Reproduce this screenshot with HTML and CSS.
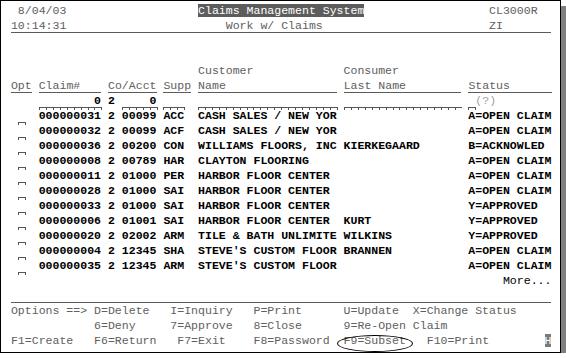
FILE: index.html
```html
<!DOCTYPE html>
<html lang="en">
<head>
	<meta charset="UTF-8" />
	<title>Work w/ Claims</title>
	<link rel="stylesheet" href="styles.css">
</head>
<body>
<div class="screen">
<div class="row">  8/04/03                   <span class="title">Claims Management System</span>                  CL3000R</div>
<div class="row"> <span class="ul">10:14:31                       Work w/ Claims                        ZI       </span></div>
<div class="row"> </div>
<div class="row"> </div>
<div class="row">                            Customer             Consumer</div>
<div class="row"> <span class="ul">Opt</span> <span class="ul">Claim#   </span> <span class="ul">Co/Acct</span> <span class="ul">Supp</span> <span class="ul">Name                </span> <span class="ul">Last Name        </span> <span class="ul">Status      </span></div>
<div class="row">     <span class="fld data">        0</span> <span class="data">2</span> <span class="fld data">    0</span> <span class="fld">   </span>  <span class="fld">                    </span> <span class="fld">                 </span> <span class="fld"> </span><span class="hint">(?)</span></div>
<div class="row">  <span class="fld"> </span>  <span class="data">000000031 2 00099 ACC  CASH SALES / NEW YOR                   A=OPEN CLAIM</span></div>
<div class="row">  <span class="fld"> </span>  <span class="data">000000032 2 00099 ACF  CASH SALES / NEW YOR                   A=OPEN CLAIM</span></div>
<div class="row">  <span class="fld"> </span>  <span class="data">000000036 2 00200 CON  WILLIAMS FLOORS, INC KIERKEGAARD       B=ACKNOWLED</span></div>
<div class="row">  <span class="fld"> </span>  <span class="data">000000008 2 00789 HAR  CLAYTON FLOORING                       A=OPEN CLAIM</span></div>
<div class="row">  <span class="fld"> </span>  <span class="data">000000011 2 01000 PER  HARBOR FLOOR CENTER                    A=OPEN CLAIM</span></div>
<div class="row">  <span class="fld"> </span>  <span class="data">000000028 2 01000 SAI  HARBOR FLOOR CENTER                    A=OPEN CLAIM</span></div>
<div class="row">  <span class="fld"> </span>  <span class="data">000000033 2 01000 SAI  HARBOR FLOOR CENTER                    Y=APPROVED</span></div>
<div class="row">  <span class="fld"> </span>  <span class="data">000000006 2 01001 SAI  HARBOR FLOOR CENTER  KURT              Y=APPROVED</span></div>
<div class="row">  <span class="fld"> </span>  <span class="data">000000020 2 02002 ARM  TILE &amp; BATH UNLIMITE WILKINS           Y=APPROVED</span></div>
<div class="row">  <span class="fld"> </span>  <span class="data">000000004 2 12345 SHA  STEVE'S CUSTOM FLOOR BRANNEN           A=OPEN CLAIM</span></div>
<div class="row">  <span class="fld"> </span>  <span class="data">000000035 2 12345 ARM  STEVE'S CUSTOM FLOOR                   A=OPEN CLAIM</span></div>
<div class="row">                                                                        <span class="more">More...</span></div>
<div class="row"> <span class="ul">                                                                              </span></div>
<div class="row"> Options ==> D=Delete   I=Inquiry   P=Print      U=Update  X=Change Status</div>
<div class="row">             6=Deny     7=Approve   8=Close      9=Re-Open Claim</div>
<div class="row"> F1=Create   F6=Return   F7=Exit    F8=Password  <span class="circled">F9=Subset</span>   F10=Print        <span class="cursor">H</span></div>
</div>
</body>
</html>
```

FILE: styles.css
```css
* {
	margin: 0;
	padding: 0;
	box-sizing: border-box;
}
body {
	background: #fff;
}
.screen {
	width: 561px;
	height: 353px;
	border: 1px solid #000;
	box-shadow: 6px 6px 0 #808080;
	padding: 2px 0 0 3px;
	background: #fff;
	font-family: "Liberation Mono", "DejaVu Sans Mono", monospace;
	font-size: 11.55px;
	line-height: 15px;
	color: #606060;
}
.row {
	height: 15px;
	white-space: pre;
}
.title {
	background: #5c5c5c;
	color: #fff;
}
.ul {
	padding-bottom: 1px;
	background: linear-gradient(#5a5a5a, #5a5a5a) left bottom / 100% 1px no-repeat;
}
.data {
	color: #000;
	font-weight: bold;
}
.hint {
	color: #a0a0a0;
}
.more {
	color: #000;
}
.fld {
	padding: 0 1px 3px 0;
	margin-right: -1px;
	background-image:
		linear-gradient(#555, #555),
		repeating-linear-gradient(to right, #555 0 1px, transparent 1px 1ch);
	background-size: 100% 1px, 100% 2px;
	background-position: left bottom 2px, left bottom;
	background-repeat: no-repeat;
}
.circled {
	position: relative;
}
.circled::after {
	content: "";
	position: absolute;
	left: -7px;
	right: -7px;
	top: 1px;
	bottom: -5px;
	border: 1px solid #000;
	border-radius: 50%;
}
.cursor {
	background: #7a7a7a;
	color: #fff;
}
```
